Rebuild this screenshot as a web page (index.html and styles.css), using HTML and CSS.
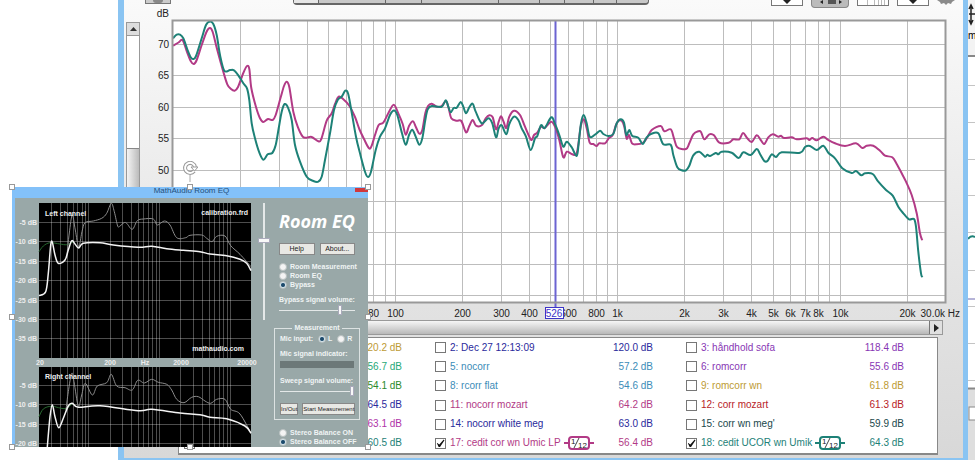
FILE: index.html
```html
<!DOCTYPE html>
<html lang="en">
<head>
    <meta charset="UTF-8">
    <meta name="viewport" content="width=device-width, initial-scale=1.0">
    <title>Room EQ measurements</title>
    <link rel="stylesheet" href="styles.css">
</head>
<body>

<div class="desktop">

    <!-- Window behind, only its left edge shows -->
    <div class="back-window">
        <svg viewBox="968 0 7 460" preserveAspectRatio="xMinYMin slice">
            <rect x="968" y="0" width="7" height="56" fill="#f3f3f3"/>
            <path d="M969 14H975M971 6V23M969 9L971 5L973 9M969 20L971 24L973 20" stroke="#222" stroke-width="1.5" fill="none"/>
            <text x="968" y="39" class="back-text">mi</text>
            <path d="M968 56H975" stroke="#888" stroke-width="2"/>
            <path d="M968 85.5H975M968 122.5H975M968 159.5H975M968 195.5H975M968 232.5H975M968 270.5H975M968 306.5H975M968 343.5H975M968 380.5H975" stroke="#c4c4c4"/>
            <path d="M968 239Q971 235 975 237" stroke="#1d8177" stroke-width="2" fill="none"/>
            <path d="M968 299H975" stroke="#6d69b0"/>
            <rect x="968" y="388" width="7" height="72" fill="#dedede"/>
            <path d="M968 388.5H975" stroke="#888" stroke-width="2"/>
            <rect x="969" y="407" width="7" height="13" fill="#fff" stroke="#888"/>
        </svg>
    </div>

    <!-- Measurement window -->
    <main class="main-window">
        <div class="toolbar">
            <button class="tool tool-camera" aria-label="Capture"><span></span></button>
            <div class="segments">
                <button aria-label="Tab 1"></button><button aria-label="Tab 2"></button><button aria-label="Tab 3"></button><button aria-label="Tab 4"></button><button aria-label="Tab 5"></button><button aria-label="Tab 6"></button><button aria-label="Tab 7"></button><button aria-label="Tab 8"></button><button aria-label="Tab 9"></button>
            </div>
            <div class="tools">
                <button class="tool" aria-label="Scrollbars"><svg width="30" height="5"><path d="M11 0H19L15 4Z" fill="#222"/></svg></button>
                <button class="tool pressed" aria-label="Fit"><svg width="36" height="7"><path d="M11 0V4L8 2ZM27 0V4L30 2Z" fill="#222"/><path d="M16 0H24V4H16Z" fill="#555"/></svg></button>
                <button class="tool" aria-label="Frequency axis"><svg width="30" height="5"><path d="M9.500 0V5M16.500 0V5M20.500 0V5M23.500 0V5M26.500 0V5" stroke="#bbb"/></svg></button>
                <button class="tool" aria-label="Limits"><svg width="30" height="5"><path d="M11 0H19L15 4Z" fill="#222"/></svg></button>
                <button class="gear" aria-label="Controls"><svg width="18" height="5"><path d="M0 0H18L15 2L14 4L11 3L9 5L7 3L4 4L3 2Z" fill="#8b8b8b"/></svg></button>
            </div>
        </div>

        <div class="graph-row">
            <div class="vscroll">
                <button aria-label="Scroll up"><svg width="7" height="4"><path d="M0 4L3.500 0L7 4Z" fill="#333"/></svg></button>
                <div class="vtrack"></div>
                <div class="vthumb"></div>
            </div>
            <svg id="graph" class="graph" viewBox="141 8 822 312" role="img" aria-label="SPL by frequency">
                <rect x="173" y="21" width="772" height="281" fill="#fff"/>
                <g id="graphGrid"></g>
                <path d="M555.500 21V308" class="cursor"/>
                <g id="graphCurves"></g>
                <rect x="172.500" y="20.500" width="773" height="282" class="frame"/>
                <g id="graphLabels"></g>
                <rect x="545.500" y="307.500" width="18" height="11" class="cursor-box"/>
                <text x="554" y="317" class="axis cursor-label">526</text>
            </svg>
        </div>

        <div class="hscroll">
            <div class="hthumb"></div>
            <button aria-label="Scroll right"><svg width="5" height="8"><path d="M0 0L5 4L0 8Z" fill="#222"/></svg></button>
        </div>

        <div class="legend">
            <div class="trace gold"><input type="checkbox" id="t1"><label for="t1">1:</label><output>20.2 dB</output></div>
            <div class="trace navy"><input type="checkbox" id="t2"><label for="t2">2: Dec 27 12:13:09</label><output>120.0 dB</output></div>
            <div class="trace purple"><input type="checkbox" id="t3"><label for="t3">3: håndhold sofa</label><output>118.4 dB</output></div>

            <div class="trace mint"><input type="checkbox" id="t4"><label for="t4">4:</label><output>56.7 dB</output></div>
            <div class="trace sky"><input type="checkbox" id="t5"><label for="t5">5: nocorr</label><output>57.2 dB</output></div>
            <div class="trace purple"><input type="checkbox" id="t6"><label for="t6">6: romcorr</label><output>55.6 dB</output></div>

            <div class="trace green"><input type="checkbox" id="t7"><label for="t7">7:</label><output>54.1 dB</output></div>
            <div class="trace sky"><input type="checkbox" id="t8"><label for="t8">8: rcorr flat</label><output>54.6 dB</output></div>
            <div class="trace gold"><input type="checkbox" id="t9"><label for="t9">9: romcorr wn</label><output>61.8 dB</output></div>

            <div class="trace navy"><input type="checkbox" id="t10"><label for="t10">10:</label><output>64.5 dB</output></div>
            <div class="trace pink"><input type="checkbox" id="t11"><label for="t11">11: nocorr mozart</label><output>64.2 dB</output></div>
            <div class="trace red"><input type="checkbox" id="t12"><label for="t12">12: corr mozart</label><output>61.3 dB</output></div>

            <div class="trace magenta"><input type="checkbox" id="t13"><label for="t13">13:</label><output>63.1 dB</output></div>
            <div class="trace navy"><input type="checkbox" id="t14"><label for="t14">14: nocorr white meg</label><output>63.0 dB</output></div>
            <div class="trace dark"><input type="checkbox" id="t15"><label for="t15">15: corr wn meg'</label><output>59.9 dB</output></div>

            <div class="trace teal"><input type="checkbox" id="t16"><label for="t16">16:</label><output>60.5 dB</output></div>
            <div class="trace pink">
                <input type="checkbox" id="t17" checked><label for="t17">17: cedit cor wn Umic LP</label>
                <svg class="smoothing" width="30" height="14"><path d="M0 7H5M25 7H30"/><rect x="5" y="1" width="20" height="12" rx="3"/><path d="M10 12L15 2" class="slash"/><text x="7" y="8">1</text><text x="14" y="12">12</text></svg>
                <output>56.4 dB</output>
            </div>
            <div class="trace teal">
                <input type="checkbox" id="t18" checked><label for="t18">18: cedit UCOR wn Umik</label>
                <svg class="smoothing" width="30" height="14"><path d="M0 7H5M25 7H30"/><rect x="5" y="1" width="20" height="12" rx="3"/><path d="M10 12L15 2" class="slash"/><text x="7" y="8">1</text><text x="14" y="12">12</text></svg>
                <output>64.3 dB</output>
            </div>
        </div>
    </main>

    <!-- Room EQ plugin window -->
    <section class="eq-window">
        <header class="eq-title">MathAudio Room EQ<button class="close" aria-label="Close"></button></header>
        <div class="eq-body">
            <svg id="eq" class="eq-graph" viewBox="15 198 242 249" role="img" aria-label="Room EQ response">
                <rect x="39" y="203" width="212" height="155" fill="#000"/>
                <rect x="39" y="367" width="212" height="80" fill="#000"/>
                <g id="eqGrid"></g>
                <g id="eqCurves"></g>
                <g id="eqLabels"></g>
                <text x="45" y="216" class="eq-text">Left channel</text>
                <text x="248" y="215" class="eq-text end">calibration.frd</text>
                <text x="244" y="351" class="eq-text end">mathaudio.com</text>
                <text x="45" y="379" class="eq-text">Right channel</text>
            </svg>
            <input type="range" class="gain" min="0" max="100" value="69" aria-label="Gain">
            <div class="controls">
                <h1>Room EQ</h1>
                <div class="buttons"><button>Help</button><button>About...</button></div>
                <div class="options">
                    <label><input type="radio" name="mode">Room Measurement</label>
                    <label><input type="radio" name="mode">Room EQ</label>
                    <label><input type="radio" name="mode" checked>Bypass</label>
                </div>
                <label class="caption" for="bypassVolume">Bypass signal volume:</label>
                <input type="range" id="bypassVolume" min="0" max="100" value="82">
                <fieldset>
                    <legend>Measurement</legend>
                    <div class="mic">Mic input:
                        <label><input type="radio" name="mic" checked>L</label>
                        <label><input type="radio" name="mic">R</label>
                    </div>
                    <div class="caption">Mic signal indicator:</div>
                    <div class="meter"></div>
                    <label class="caption" for="sweepVolume">Sweep signal volume:</label>
                    <input type="range" id="sweepVolume" min="0" max="100" value="100">
                    <div class="buttons"><button>In/Out</button><button class="start">Start Measurement</button></div>
                </fieldset>
                <div class="options stereo">
                    <label><input type="radio" name="balance">Stereo Balance ON</label>
                    <label><input type="radio" name="balance" checked>Stereo Balance OFF</label>
                </div>
            </div>
        </div>

        <!-- Selection handles -->
        <svg class="rotate" width="16" height="24"><path d="M8 14V21" stroke="#aaa"/><path d="M12 10A5 5 0 1 1 13 6" stroke="#999" stroke-width="4" fill="none"/><path d="M12 10A5 5 0 1 1 13 6" stroke="#fff" stroke-width="2" fill="none"/><path d="M9 6H16L12.500 10Z" fill="#fff" stroke="#999"/></svg>
        <i class="handle top left"></i>
        <i class="handle top center"></i>
        <i class="handle top right"></i>
        <i class="handle middle left"></i>
        <i class="handle middle right"></i>
        <i class="handle bottom left"></i>
        <i class="handle bottom center"></i>
        <i class="handle bottom right"></i>
    </section>
</div>

<script src="script.js"></script>
</body>
</html>
```

FILE: styles.css
```css
* {
    box-sizing: border-box;
}

body {
    margin: 0;
    background-color: #fff;
    font-family: "Liberation Sans", Arial, sans-serif;
    font-size: 10px;
    color: #222;
}

button {
    padding: 0;
    font-family: inherit;
}

svg {
    display: block;
}

.desktop {
    position: relative;
    min-height: 100vh;
    overflow: hidden;
}

.back-window {
    position: absolute;
    top: 0;
    right: 0;
    bottom: 0;
    width: 7px;
}

.back-window svg {
    width: 100%;
    height: 100%;
}

.back-text {
    font-size: 10px;
}

/* Measurement window */
.main-window {
    position: absolute;
    top: 0;
    left: 118px;
    right: 7px;
    padding-bottom: 3px;
    border: solid #8ac4f2;
    border-width: 0 5px 2px 6px;
    background: linear-gradient(#fafafa, #e4e4e4 60%, #d8d8d8);
}

.toolbar {
    display: flex;
    align-items: flex-start;
    height: 8px;
    padding: 0 8px 0 21px;
}

.tool {
    width: 32px;
    height: 6px;
    border: 1px solid #777;
    border-top: 0;
    background-color: #fff;
}

.tool-camera {
    width: 26px;
    height: 4px;
    background-color: #ccc;
}

.tool-camera span {
    display: block;
    width: 10px;
    height: 3px;
    margin: 0 auto;
    border-radius: 0 0 5px 5px;
    background-color: #888;
}

.segments {
    display: grid;
    grid-template-columns: 25fr 68fr 36fr 77fr 41fr 26fr 29fr 23fr 31fr;
    flex: 1;
    height: 5px;
    margin: 0 122px;
    border: 1px solid #666;
    border-top: 0;
    border-bottom-width: 2px;
    border-radius: 0 0 4px 4px;
    background-color: #c8c8c8;
}

.segments button {
    border: 0;
    border-right: 1px solid #666;
    background: none;
}

.segments button:first-child {
    background-color: #e6e6e6;
}

.segments button:last-child {
    border: 0;
}

.tools {
    display: flex;
    align-items: flex-start;
    gap: 8px;
}

.tool.pressed {
    width: 38px;
    height: 8px;
    border-color: #888;
    border-radius: 0 0 4px 4px;
    background-color: #bbb;
}

.gear {
    width: 18px;
    height: 5px;
    border: 0;
    background: none;
}

.graph-row {
    display: flex;
}

.vscroll {
    display: flex;
    flex-direction: column;
    width: 14px;
    margin: 14px 1px 18px 2px;
    border: 1px solid #999;
}

.vscroll button {
    display: flex;
    align-items: center;
    justify-content: center;
    height: 13px;
    border: 0;
    border-bottom: 1px solid #999;
    background-color: #ddd;
}

.vtrack {
    height: 112px;
    background-color: #fff;
}

.vthumb {
    flex: 1;
    border-top: 1px solid #888;
    background: linear-gradient(90deg, #f4f4f4, #bbb);
}

.graph {
    flex: 1;
    min-width: 0;
}

.grid {
    fill: none;
    stroke: #bdbdbd;
}

.frame {
    fill: none;
    stroke: #999;
    stroke-width: 2;
}

.curve {
    fill: none;
    stroke-width: 2;
    stroke-linejoin: round;
}

.axis {
    font-size: 10px;
    fill: #222;
    text-anchor: middle;
}

.axis.end {
    text-anchor: end;
}

.cursor {
    stroke: #6c64d2;
    stroke-width: 2;
}

.cursor-box {
    fill: #fff;
    stroke: #3c34c8;
}

.cursor-label {
    fill: #3c34c8;
}

.hscroll {
    display: flex;
    height: 15px;
    margin: 0 20px 0 48px;
    border: 1px solid #999;
}

.hthumb {
    flex: 1;
    background: linear-gradient(#f6f6f6, #b8b8b8);
}

.hscroll button {
    display: flex;
    align-items: center;
    justify-content: center;
    width: 13px;
    border: 0;
    border-left: 1px solid #777;
    background-color: #e0e0e0;
}

/* Trace list */
.legend {
    display: grid;
    grid-template-columns: repeat(3, 1fr);
    grid-auto-rows: 1fr;
    min-height: 118px;
    margin: 2px 25px 0 54px;
    padding-left: 5px;
    border: 1px solid #888;
    border-bottom-width: 2px;
    background-color: #fff;
}

.trace {
    display: flex;
    align-items: center;
    padding-right: 33px;
    line-height: 12px;
}

.trace input {
    appearance: none;
    display: grid;
    place-items: center;
    width: 11px;
    height: 11px;
    margin: 0 4px 0 0;
    border: 1px solid #777;
    background-color: #fff;
}

.trace input:checked::before {
    content: "";
    width: 8px;
    height: 8px;
    background-color: #111;
    clip-path: polygon(0 40%, 35% 65%, 90% 0, 100% 10%, 40% 100%, 30% 100%);
}

.trace label {
    width: 114px;
    white-space: nowrap;
}

.trace output {
    margin-left: auto;
}

.smoothing {
    fill: none;
    stroke: currentColor;
    stroke-width: 2;
}

.smoothing rect {
    fill: #fff;
}

.smoothing .slash {
    stroke: #444;
    stroke-width: 1;
}

.smoothing text {
    fill: #222;
    stroke: none;
    font-size: 8px;
}

.gold { color: #bd9a34; }
.navy { color: #2a2a9c; }
.purple { color: #8736b4; }
.mint { color: #26a878; }
.sky { color: #3c8cb8; }
.green { color: #2c8a2c; }
.pink { color: #b23a86; }
.red { color: #b81c28; }
.magenta { color: #b034a8; }
.dark { color: #20484c; }
.teal { color: #1d8177; }

/* Room EQ window */
.eq-window {
    position: absolute;
    top: 187px;
    left: 12px;
    width: 356px;
    padding-left: 3px;
    background-color: #83c1f9;
}

.eq-title {
    display: flex;
    justify-content: center;
    height: 11px;
    font-size: 8px;
    line-height: 8px;
    color: #24507c;
}

.close {
    position: absolute;
    top: 1px;
    right: 0;
    width: 13px;
    height: 4px;
    border: 0;
    background-color: #d0383c;
}

.eq-body {
    display: flex;
    align-items: flex-start;
    height: 249px;
    background-color: #99a8a8;
    font-size: 7px;
    font-weight: bold;
    color: #f0f4f4;
    overflow: hidden;
}

.eq-graph {
    flex: none;
    width: 242px;
}

.eq-grid {
    fill: none;
    stroke: #fff;
    stroke-opacity: 0.3;
}

.eq-text {
    font-size: 7px;
    font-weight: bold;
    fill: #eee;
}

.eq-text.end {
    text-anchor: end;
}

.eq-text.middle {
    text-anchor: middle;
}

.controls {
    flex: 1;
    display: flex;
    flex-direction: column;
    min-width: 0;
    padding-right: 8px;
    line-height: 10px;
}

.controls h1 {
    margin: 12px 0 0 5px;
    font-family: "Open Sans", sans-serif;
    font-size: 18px;
    line-height: 22px;
    font-style: italic;
    color: #fff;
    white-space: nowrap;
}

.buttons {
    display: flex;
    gap: 5px;
    margin: 11px 5px 0;
}

.buttons button {
    flex: 1;
    height: 12px;
    border: 1px solid #888;
    background-color: #e8e8e4;
    font-size: 7px;
    line-height: 10px;
    color: #222;
    white-space: nowrap;
}

.options {
    margin: 7px 0 6px 5px;
}

.options label {
    display: flex;
    align-items: center;
    gap: 3px;
    height: 9px;
    white-space: nowrap;
}

.stereo {
    margin: 8px 0 0 5px;
}

input[type="radio"] {
    appearance: none;
    flex: none;
    width: 8px;
    height: 8px;
    margin: 0;
    border: 1px solid #b8c0c0;
    border-radius: 50%;
    background-color: #f4f4f4;
}

input[type="radio"]:checked {
    background: radial-gradient(#1c4a6c 35%, #d4e4ec 60%);
}

.caption {
    margin-left: 5px;
    font-size: 7px;
    white-space: nowrap;
}

input[type="range"] {
    appearance: none;
    min-width: 0;
    height: 10px;
    margin: 0 5px;
    background: linear-gradient(#e4e8e8, #e4e8e8) center / 100% 1px no-repeat;
}

input[type="range"]::-webkit-slider-thumb {
    appearance: none;
    width: 4px;
    height: 10px;
    border: 1px solid #aab;
    background-color: #f8f8f8;
}

input[type="range"].gain {
    flex: none;
    writing-mode: vertical-lr;
    direction: rtl;
    width: 12px;
    height: 117px;
    margin: 5px 4px 0 1px;
    background-size: 2px 100%;
}

input[type="range"].gain::-webkit-slider-thumb {
    width: 12px;
    height: 5px;
}

fieldset {
    display: flex;
    flex-direction: column;
    min-width: 0;
    margin: 8px 0 0;
    padding: 1px 0 4px;
    border: 1px solid #dce2e2;
}

legend {
    margin: 0 auto;
    padding: 0 2px;
}

.mic {
    display: flex;
    align-items: center;
    gap: 5px;
    margin: 0 5px 5px;
    white-space: nowrap;
}

.mic label {
    display: flex;
    align-items: center;
    gap: 2px;
}

.meter {
    height: 7px;
    margin: 2px 5px 8px;
    background-color: #6c7878;
}

fieldset .buttons {
    gap: 4px;
    margin-top: 7px;
}

fieldset .buttons button {
    font-size: 6px;
}

fieldset .buttons .start {
    flex: 0 0 52px;
}

/* Selection handles */
.handle {
    position: absolute;
    width: 6px;
    height: 6px;
    border: 1px solid #999;
    background-color: #fff;
}

.rotate {
    position: absolute;
    top: -26px;
    left: 170px;
}

.top { top: -3px; }
.middle { top: 127px; }
.bottom { bottom: -3px; }
.left { left: -3px; }
.center { left: 175px; }
.right { right: -3px; }
```

FILE: script.js
```js
var PINK = '#b23a86';
var TEAL = '#1d8177';

// Curves as x,y pairs in the coordinates of each svg
var pinkCurve = '173,45.7 178.5,42.5 182.7,40.3 187,52 190.7,61 193.7,64 196.7,60 201.7,45 206.7,31.5 210,28 212.7,32 217.3,50 223.3,71.7 227.3,84.3 230.7,88.7 234.7,90.7 238,87 243.3,73 247,66 249.3,69 251.3,88 256,107 260,118.3 263.3,122 268,119 272.7,120 275.7,115 280.7,97.3 284,86 286.7,81.7 289.3,87 293.3,111.7 297.7,126.7 302.7,136.7 306.7,137.7 311.7,137 318.3,141.3 321.3,139 326.7,120.7 331.7,113.3 335,104 338.7,96.7 343.3,99.3 349.3,105.7 355,117 359.3,129 364,139 369,148.3 371.7,145.7 375,135 378.7,125 383.3,122.7 388.3,113.3 393.7,104.7 398.3,113.3 402.7,124 405.7,134.7 409,126 413,121.3 416,127.3 419.3,133.7 422.3,130 425.3,113.3 428,106 431.7,103.7 436.7,106.7 441.7,106 446,101 448.7,108.3 451.3,118.3 456.7,120.7 461.3,121 466,132.3 469.3,126 472.7,120 476,125.7 481.7,125.3 485.7,118.3 489.3,115.3 492.7,117.3 496,129.3 498.7,121.7 501,116.3 503.7,122 506.3,128 509.3,116.7 514,110.7 520,115 525,126.7 531,139.7 534,135 537.3,132.7 541,126.7 544.7,128 551.3,121.7 555.7,128.3 559.3,140 563.3,157.3 566.7,151.7 571.7,154 576,154.7 578,146.7 580.7,126.7 583.7,119.3 586.7,128.3 589.7,142.7 593.3,144 596.7,146 599.3,143.3 605,143.3 608.7,138.3 612.7,135 616,125 618.7,120.7 622,121 624.3,126.7 626.7,138.7 629,135 632,143.3 636.7,144.3 642.7,143 646.7,138.3 651.7,130 660.7,126 664.3,131.3 670.7,129.3 674,138.3 677.3,147.3 686,149 689.3,143.3 693.3,134.3 698.3,131.3 701,132 704.3,139.3 709.3,134.3 714,135.3 719.3,142.7 728.7,142.7 733.3,139.3 739.3,139.3 743,133 747.3,138.3 751.7,142 756.7,135.3 760.7,140 764.3,144 768.3,137.3 772.7,134.3 778.3,136.7 781,135.7 784,138 791.7,137.3 796.7,139.3 806.7,138.3 809.3,140 812.3,138 816.7,140.3 823.3,136.7 828.3,140 835,143.3 845,146 856,143.3 862.3,148 866.7,145.7 873.3,145.7 880,150.7 885,155.7 892.3,157.3 896.7,164 901.7,173.3 906,181.7 911.7,195 916.7,213.3 920,233.3 922.3,240.3';
var tealCurve = '173,38.3 176.7,34.7 180,34.7 183.3,38.3 187.3,49.3 190.7,57.3 193.3,59 196,56 201.7,38.3 206,25 210,21.5 213.3,24 216.7,35 220,55 224.3,70.7 230,70 234,70.3 238.3,75.3 243.3,83.3 247,88.3 249.3,100 251.7,123.3 255,138.3 259,151.7 263.3,159.7 267.7,154.3 272.3,153 275.7,145 278.7,128.3 281.7,111.7 284.7,104 288.3,108.3 291.7,120 295,145 300,161.7 306.7,176.7 313.3,181 318.3,181.7 321.7,176.7 325,160 330,133.3 334,110 337.7,100 341.7,96.7 345.3,90.7 348,93.3 350.7,106.7 356,136.7 360,153.3 365,171.7 368,177 371,171.7 375.7,150 380,136.7 385,128.3 390,115 394,110.5 397.3,115 402,133.3 405.7,144.7 409,135 412.3,129.7 415.7,136.7 419.3,144.7 422.3,138.3 425.3,120 427.7,109.3 431.7,106 441.7,106.7 445.7,100.3 448.3,106.7 450.7,112.3 453.7,108 456.7,107.7 460.7,102 463.3,106.7 466,113.3 469.3,107.3 472.7,103.7 475.7,111.7 481.7,123.3 488.3,118.3 492.3,123.3 496,137.3 498.7,128.3 501.7,125.3 506.3,134.3 509.3,124 514,116.7 518.3,120 521.7,128.3 526,136.7 530.7,150 535,138.3 537.3,136 541,125.3 544.7,128 551.3,117.3 555,124 559.3,135 563.3,146.7 566.7,141.7 571.7,147.3 576.7,156 578.7,143.3 581,123.3 583.7,115 586.7,123.3 589.7,136.7 595,134.7 600,130.7 603.3,134 608.3,136 613.3,134 616.7,123.3 620.7,119.3 624,122.7 626.3,135 629.3,130 632.3,136 638.3,137.7 642.7,144 646.7,137.3 652,133.5 658.3,133.3 663.3,144.3 670.7,144.7 673.3,155 677.3,167.3 681.7,170.3 686,170.3 689.3,165.7 693.3,155.3 699.3,151.7 705,156.7 707.3,154.7 710,156 715.7,153 718.3,154.3 721.7,151.7 731.7,152.7 738.7,158 743.3,152.3 750.7,155 756.7,149 760,154 764.3,161 767.7,160.7 771.7,154.3 776,157 781.7,152.3 800,152.7 805,147 810,146 816.7,150 823.3,145.7 828.3,152.7 835,158.3 842.3,168.3 851.7,173 856,171 861.3,175.3 865,173.3 872.7,174 878.3,181.7 886,190 892.7,195.7 898.3,206.7 903.3,213.3 909,219.3 914,219 916,226.7 918.3,251.7 921,273.3 922.3,277.3';

var eqCurves = [
    ['#27672f', 1, '39,251.7 43.3,246 50,242.7 60,244 66.7,244.7 73,242'],
    ['#27672f', 1, '39,416.7 43.3,409 51.7,406.3 65,408.7 72,404'],
    ['#8c8c8c', 1, '66.7,258 69.3,233 72.3,215 75.3,230 78.7,246.7 82,231.7 85,222.7 93.3,221 101.7,218.3 106.7,213.3 111.3,203.3 114.3,211.7 117.7,226 120,226 124,222.7 126.7,223.3 132.3,229.3 137.3,220.7 143.3,219 153.3,219 157.3,225 164.3,221 170,225 176.7,237.7 185.7,237.7 190,235.3 201.7,235 206.7,238.3 212,241.7 216.7,236.3 225,236 230.7,245.7 240,254.3 251,266.7'],
    ['#8c8c8c', 1, '66,410 68.3,391.7 71.7,373.3 74,381.7 78.3,406 81.7,395 85.3,383.3 92.3,395 97.3,386 106.7,382.7 111.3,374.3 116.7,386 125,387.7 132.3,390 137.7,380.3 144.3,383 151.7,379.3 158.3,382.3 166.7,384.3 171.7,390 176.7,399.3 184,402.7 191.7,397.3 198.3,396.7 205,401 210.7,403.3 216.7,399.3 225,399.3 230.7,409.3 240,414 251,433.3'],
    ['#f4f4f4', 1.5, '39,295.7 45.7,291.7 48.3,273.3 50.7,245 52.3,242.3 55,255 58.3,263.3 65,260 68.3,250 71.7,240.7 75,244 78.7,248 83.3,243.3 100,242.7 113.3,245 138.3,247.3 151.7,246.3 166.7,248.7 183.3,250.3 200,251.7 210,254 226.7,255.7 240,259.3 246.7,263.3 251,270.7'],
    ['#f4f4f4', 1.5, '47.3,447 50,416.7 52.3,404.7 55,416.7 58.7,427.7 63.3,418.3 68.3,406 72.3,403.3 78.3,407.3 100,405.7 138.3,410.7 151.7,409.3 180,413 200,414.7 210,417.3 226.7,418.7 245,426 251,433.3']
];

function add(parent, name, attrs, text) {
    var el = document.createElementNS('http://www.w3.org/2000/svg', name);
    for (var key in attrs) {
        el.setAttribute(key, attrs[key]);
    }
    if (text) {
        el.textContent = text;
    }
    document.getElementById(parent).appendChild(el);
}

// Smooth path through all the points
function smooth(str) {
    var p = str.split(' ').map(function (s) { return s.split(',').map(Number); });
    var d = 'M' + p[0];
    for (var i = 0; i < p.length - 1; i++) {
        var a = p[i - 1] || p[i], b = p[i], c = p[i + 1], e = p[i + 2] || c;
        d += 'C' + [b[0] + (c[0] - a[0]) / 6, b[1] + (c[1] - a[1]) / 6,
                    c[0] - (e[0] - b[0]) / 6, c[1] - (e[1] - b[1]) / 6, c[0], c[1]];
    }
    return d;
}

function line(parent, cls, d) {
    add(parent, 'path', { 'class': cls, d: d });
}

// Main graph: 100 Hz sits at x 395, one decade is 222 wide
function freqX(f) {
    return Math.round(395 + 222.3 * Math.log10(f / 100)) + 0.5;
}

[10, 100, 1000, 10000].forEach(function (decade) {
    for (var n = 1; n < 10; n++) {
        var f = n * decade;
        if (f > 10 && f <= 20000) {
            line('graphGrid', 'grid', 'M' + freqX(f) + ' 21V302');
        }
    }
});

for (var db = 70; db >= 30; db -= 5) {
    var y = Math.round(44 + (70 - db) * 6.28);
    line('graphGrid', 'grid', 'M173 ' + (y + 0.5) + 'H945');
    if (db >= 50) {
        add('graphLabels', 'text', { 'class': 'axis end', x: 169, y: y + 4 }, String(db));
    }
}
add('graphLabels', 'text', { 'class': 'axis end', x: 169, y: 17 }, 'dB');

[[80, '80'], [100, '100'], [200, '200'], [300, '300'], [400, '400'], [600, '600'], [800, '800'],
 [1000, '1k'], [2000, '2k'], [3000, '3k'], [4000, '4k'], [5000, '5k'], [6000, '6k'], [7000, '7k'],
 [8000, '8k'], [10000, '10k'], [20000, '20k']].forEach(function (t) {
    add('graphLabels', 'text', { 'class': 'axis', x: freqX(t[0]), y: 317 }, t[1]);
});
add('graphLabels', 'text', { 'class': 'axis end', x: 960, y: 317 }, '30.0k Hz');

add('graphCurves', 'path', { 'class': 'curve', stroke: PINK, d: smooth(pinkCurve) });
add('graphCurves', 'path', { 'class': 'curve', stroke: TEAL, d: smooth(tealCurve) });

// Room EQ graphs: 20 Hz at x 39, one decade is 70.7 wide
[10, 100, 1000, 10000].forEach(function (decade) {
    for (var n = 1; n < 10; n++) {
        var f = n * decade;
        if (f > 20 && f < 20000) {
            var x = Math.round(39 + 70.7 * Math.log10(f / 20)) + 0.5;
            line('eqGrid', 'eq-grid', 'M' + x + ' 203V358M' + x + ' 367V447');
        }
    }
});

function eqRows(top, count) {
    for (var i = 0; i < count; i++) {
        var y = Math.round(top + i * 19.4);
        line('eqGrid', 'eq-grid', 'M39 ' + (y + 0.5) + 'H251');
        add('eqLabels', 'text', { 'class': 'eq-text end', x: 37, y: y + 3 }, '-' + (i + 1) * 5 + ' dB');
    }
}
eqRows(222, 7);
eqRows(385, 4);

[[40, '20'], [110, '200'], [145, 'Hz'], [181, '2000'], [247, '20000']].forEach(function (t) {
    add('eqLabels', 'text', { 'class': 'eq-text middle', x: t[0], y: 365 }, t[1]);
});

eqCurves.forEach(function (c) {
    add('eqCurves', 'path', { fill: 'none', stroke: c[0], 'stroke-width': c[1], d: smooth(c[2]) });
});
```
